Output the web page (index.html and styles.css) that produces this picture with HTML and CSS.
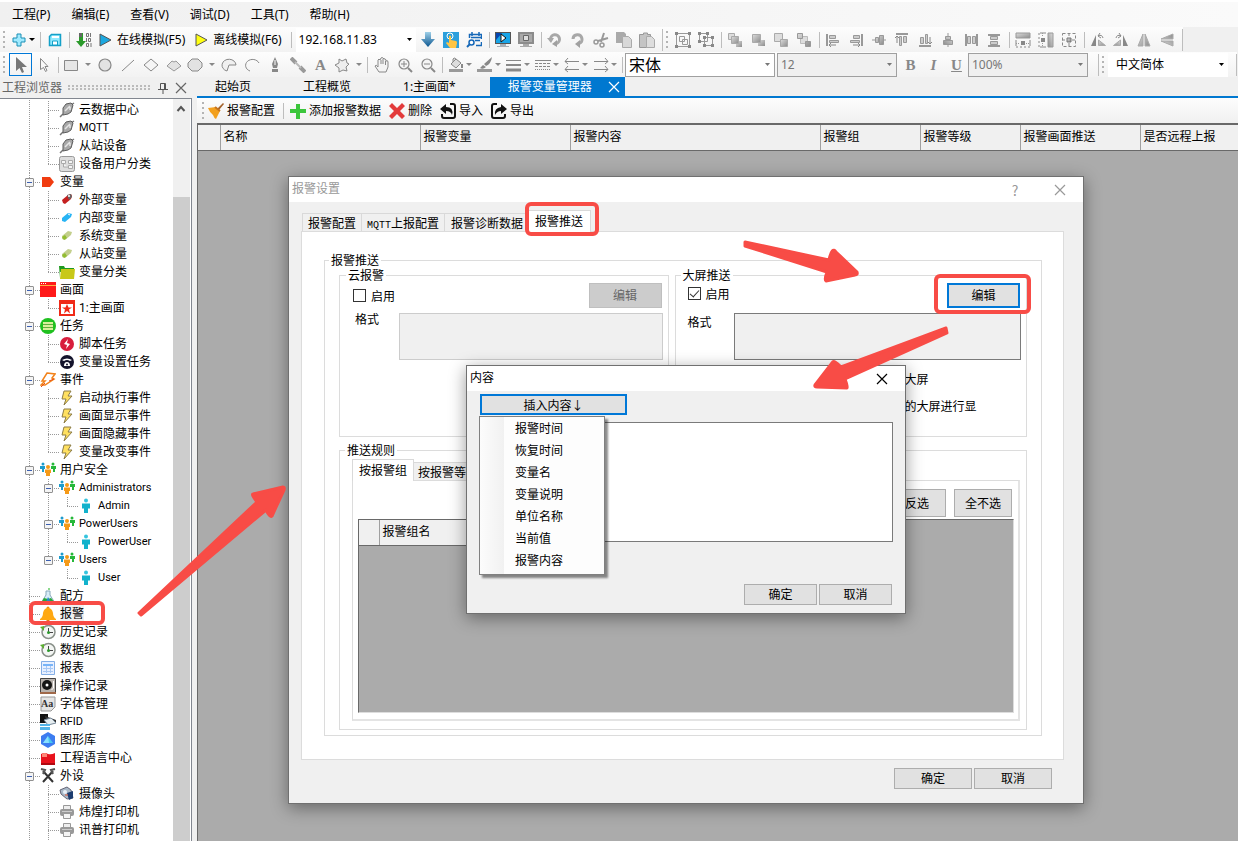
FILE: index.html
```html
<!DOCTYPE html>
<html lang="zh-CN">
<head>
<meta charset="utf-8">
<title>报警变量管理器</title>
<link rel="stylesheet" href="styles.css">
</head>
<body>
<svg class="sprite" aria-hidden="true">
  <defs>
    <linearGradient id="gr" x1="0" y1="0" x2="1" y2="1"><stop offset="0" stop-color="#dcdcdc"/><stop offset="1" stop-color="#8c8c8c"/></linearGradient>
    <linearGradient id="down" x1="0" y1="0" x2="0" y2="1"><stop offset="0" stop-color="#9fd0e8"/><stop offset="1" stop-color="#0a5590"/></linearGradient>
  </defs>
  <symbol id="add" viewBox="0 0 16 16"><path d="M6 2h4v4h4v4h-4v4H6v-4H2V6h4z" fill="#9feaff" stroke="#1a8fb5"/></symbol>
  <symbol id="save" viewBox="0 0 16 16"><path d="M2.500 4.500l2-2h9v11h-11z" fill="#8feaff" stroke="#14a0c8" stroke-width="1.500"/><path d="M5.500 13V9h5v4z" fill="#fff" stroke="#14a0c8"/><path d="M5 4h7v2H5z" fill="#fff"/></symbol>
  <symbol id="load" viewBox="0 0 16 16"><path d="M3 1h4v8h3l-5 6-5-6h3z" fill="#2b9a2b"/><path d="M3 1h3v4H3z" fill="#666"/><path d="M10.500 1.500h2v3h-2zM14.500 1v4M10.500 6v4M12.500 6.500h2v3h-2zM10.500 11.500h2v3h-2zM15 11v4" fill="none" stroke="#777"/></symbol>
  <symbol id="playb" viewBox="0 0 16 16"><path d="M3 2l11 6-11 6z" fill="#1ba8e0" stroke="#555"/></symbol>
  <symbol id="playy" viewBox="0 0 16 16"><path d="M3 2l11 6-11 6z" fill="#ffff10" stroke="#555"/></symbol>
  <symbol id="darr" viewBox="0 0 16 16"><path d="M5 0h6v7h4l-7 8-7-8h4z" fill="url(#down)"/></symbol>
  <symbol id="hand2" viewBox="0 0 16 16"><path d="M0 0h16v16H0z" fill="#2b9fdc"/><circle cx="7" cy="4" r="3" fill="none" stroke="#fff"/><path d="M6 4q1-1 2 0v4l5 1q1 0 1 2l-1 5H7l-4-5 1-1 2 1z" fill="#ffc544"/></symbol>
  <symbol id="find" viewBox="0 0 16 16"><path d="M3.500 6V2.500h12V7M15.500 10v3.500H10M5 5.500h10M6 0v4M13 0v4M9 8.500h5" fill="none" stroke="#1668b8" stroke-width="1.500"/><circle cx="5.500" cy="10.500" r="2.500" fill="#fff" stroke="#1668b8" stroke-width="1.500"/><path d="M4 12l-3 3" stroke="#1668b8" stroke-width="2"/></symbol>
  <symbol id="monp" viewBox="0 0 16 16"><path d="M0 0h16v12H0z" fill="#555"/><path d="M1 1h14v10H1z" fill="#18a5e8"/><path d="M1 8V1h6z" fill="#0846b0"/><path d="M6 2l5 4-5 4z" fill="#fff" stroke="#111"/><path d="M5 12h6v2h3v1H2v-1h3z" fill="#a8b0b8"/></symbol>
  <symbol id="mons" viewBox="0 0 16 16"><path d="M0 0h16v12H0z" fill="#8c8c8c"/><path d="M2 2h12v8H2z" fill="#a9a9a9"/><path d="M5.500 3.500h5v5h-5z" fill="#ddd" stroke="#666"/><path d="M5 12h6v2h3v1H2v-1h3z" fill="#aaa"/></symbol>
  <symbol id="undo" viewBox="0 0 16 16"><path d="M3.500 7.500a4.500 4.500 0 1 1 6 4" fill="none" stroke="#a8a8a8" stroke-width="3"/><path d="M10 8v7l-5-3z" fill="#a0a0a0"/><path d="M0 6h7l-3 5z" fill="#a8a8a8"/></symbol>
  <symbol id="redo" viewBox="0 0 16 16"><path d="M3 7a4.500 4.500 0 1 1 6 4.500" fill="none" stroke="#a8a8a8" stroke-width="3"/><path d="M10 8l-5 4 5 4z" fill="#a0a0a0"/></symbol>
  <symbol id="cut" viewBox="0 0 16 16"><path d="M11 1L8 10M15 6L5 9" stroke="#999" stroke-width="2"/><circle cx="3" cy="10" r="2" fill="none" stroke="#999" stroke-width="1.500"/><circle cx="9" cy="13" r="2" fill="none" stroke="#999" stroke-width="1.500"/></symbol>
  <symbol id="copy" viewBox="0 0 16 16"><path d="M0 0h8l2 2v9H0z" fill="#aaa"/><path d="M6.500 4.500h6l3 3v8h-9z" fill="#d8d8d8" stroke="#aaa"/></symbol>
  <symbol id="paste" viewBox="0 0 16 16"><path d="M0.500 2.500h4V1h4v1.500h3v13h-11z" fill="#c4c4c4" stroke="#999"/><path d="M7.500 4.500h5l3 3v8h-8z" fill="#ddd" stroke="#aaa"/></symbol>
  <symbol id="group" viewBox="0 0 16 16"><path d="M1.500 1.500h13v13h-13zM4.500 4.500h5v5h-5zM7.500 7.500h5v5h-5z" fill="none" stroke="#999"/><path d="M0 0h3v3H0zM13 0h3v3h-3zM0 13h3v3H0zM13 13h3v3h-3z" fill="#888"/></symbol>
  <symbol id="ungroup" viewBox="0 0 16 16"><path d="M1.500 1.500h8v8h-8zM6.500 5.500h8v8h-8z" fill="none" stroke="#999"/><path d="M0 0h3v3H0zM8 0h3v3H8zM0 8h3v3H0zM5 4h3v3H5zM13 4h3v3h-3zM5 12h3v3H5zM13 12h3v3h-3z" fill="#888"/></symbol>
  <symbol id="lay1" viewBox="0 0 16 16"><path d="M1.500 1.500h6v6h-6z" fill="#ddd" stroke="#aaa"/><path d="M9 9h6v6H9z" fill="url(#gr)"/><path d="M4.500 4.500h7v7h-7z" fill="url(#gr)" stroke="#aaa"/></symbol>
  <symbol id="lay2" viewBox="0 0 16 16"><path d="M8 8h7v6H8z" fill="url(#gr)"/><path d="M2.500 2.500h8v8h-8z" fill="url(#gr)" stroke="#aaa"/></symbol>
  <symbol id="lay3" viewBox="0 0 16 16"><path d="M1.500 1.500h8v8h-8z" fill="#ddd" stroke="#aaa"/><path d="M7.500 7.500h7v7h-7z" fill="url(#gr)" stroke="#aaa"/></symbol>
  <symbol id="lay4" viewBox="0 0 16 16"><path d="M4.500 4.500h7v7h-7z" fill="#ddd" stroke="#bbb"/><path d="M1.500 1.500h5v5h-5zM9.500 9.500h5v5h-5z" fill="url(#gr)" stroke="#999"/></symbol>
  <symbol id="al" viewBox="0 0 16 16"><path d="M1 2h2v12H1z" fill="#999"/><path d="M4.500 3.500h6v3h-6zM4.500 8.500h9v2h-9z" fill="#ccc" stroke="#999"/><path d="M4 13h7M6 11l-2 2 2 2" fill="none" stroke="#888"/></symbol>
  <symbol id="ac" viewBox="0 0 16 16"><path d="M1 8h14" stroke="#999"/><path d="M4.500 5.500h3v5h-3zM8.500 3.500h4v9h-4z" fill="url(#gr)" stroke="#999"/></symbol>
  <symbol id="dist" viewBox="0 0 16 16"><path d="M3 2v12M14 2v12" stroke="#999" stroke-width="2"/><path d="M4.500 4.500h3v7h-3zM9.500 4.500h3v7h-3z" fill="#ccc" stroke="#999"/></symbol>
  <symbol id="samew" viewBox="0 0 16 16"><path d="M1 1h14v5H1z" fill="url(#gr)" stroke="#999"/><path d="M6 9h4v4H6z" fill="#888"/><path d="M1 8v6M15 8v6" stroke="#888"/><path d="M1 11.500h4M11 11.500h4" stroke="#999" stroke-dasharray="1 1"/><path d="M1 15h14" stroke="#888" stroke-dasharray="2 2"/></symbol>
  <symbol id="sameb" viewBox="0 0 16 16"><path d="M1.500 1.500h13v13h-13zM8 1v4M8 11v4M1 8h4M11 8h4" fill="none" stroke="#888" stroke-dasharray="3 2"/><path d="M6 6h4v4H6z" fill="url(#gr)" stroke="#777"/></symbol>
  <symbol id="flip" viewBox="0 0 16 16"><path d="M7 2v12H2zM9 2v12h5z" fill="url(#gr)" stroke="#aaa"/></symbol>
  <symbol id="rot" viewBox="0 0 16 16"><path d="M6 3v11H1z" fill="#888"/><path d="M8.500 8v5.500h7z" fill="url(#gr)" stroke="#aaa"/><path d="M8 4q4-2 5 2M10 1L8 4l3 2" fill="none" stroke="#888"/></symbol>
  <symbol id="ptr" viewBox="0 0 16 16"><path d="M3 0v14l3.500-3 2.500 5 2-1-2-5h5z" fill="#777"/></symbol>
  <symbol id="ptro" viewBox="0 0 16 16"><path d="M4.500 1.500v11l3-2 2 4 1.500-1-2-4h3z" fill="#fafafa" stroke="#888"/></symbol>
  <symbol id="rect" viewBox="0 0 16 16"><path d="M1.500 3.500h13v10h-13z" fill="#e6e6e6" stroke="#888"/></symbol>
  <symbol id="circ" viewBox="0 0 16 16"><circle cx="8" cy="8" r="6" fill="#e2e2e2" stroke="#888" stroke-width="1.200"/></symbol>
  <symbol id="line" viewBox="0 0 16 16"><path d="M2 14L14 3" stroke="#888"/></symbol>
  <symbol id="dia" viewBox="0 0 16 16"><path d="M1 8l7-6 7 6-7 6z" fill="#f5f5f5" stroke="#888"/></symbol>
  <symbol id="dia2" viewBox="0 0 16 16"><path d="M1 9l5-5 2 1 2-1 5 5-7 5z" fill="#e2e2e2" stroke="#999"/></symbol>
  <symbol id="oct" viewBox="0 0 16 16"><path d="M5 2h6l4 4v4l-4 4H5l-4-4V6z" fill="#e2e2e2" stroke="#888"/></symbol>
  <symbol id="pie" viewBox="0 0 16 16"><path d="M8 8h7a7 6 0 1 0-9 6z" fill="#f0f0f0" stroke="#888"/></symbol>
  <symbol id="arc" viewBox="0 0 16 16"><path d="M15 6A7 6 0 1 0 6 14" fill="none" stroke="#888"/></symbol>
  <symbol id="pen" viewBox="0 0 16 16"><path d="M8 0l3 7-1 4H6L5 7zM5 12h6v3H5z" fill="#888"/><path d="M8 3v5" stroke="#fff"/></symbol>
  <symbol id="pipe" viewBox="0 0 16 16"><path d="M1 1l5 5M10 10l5 5" stroke="#999" stroke-width="4"/><path d="M5 5l6 6" stroke="#bbb" stroke-width="2"/></symbol>
  <symbol id="star" viewBox="0 0 16 16"><path d="M5 2l3 2 4-2 1 4 2 1-3 3 1 4-4-1-4 2v-4L1 8l4-2z" fill="#eee" stroke="#888"/></symbol>
  <symbol id="palm" viewBox="0 0 16 16"><path d="M5 15l-4-6q1-2 3 1V3q1-2 2 0l1-2q1-1 2 0l1 1q1-1 2 1v1q2-1 2 1v5l-2 5zM7 3v4M9 2v5M11.500 4v4" fill="#f4f4f4" stroke="#888"/></symbol>
  <symbol id="zin" viewBox="0 0 16 16"><circle cx="7" cy="7" r="5" fill="#f4f4f4" stroke="#888" stroke-width="1.200"/><path d="M11 11l4 4" stroke="#888" stroke-width="2"/><path d="M4 7h6M7 4v6" stroke="#888"/></symbol>
  <symbol id="zout" viewBox="0 0 16 16"><circle cx="7" cy="7" r="5" fill="#f4f4f4" stroke="#888" stroke-width="1.200"/><path d="M11 11l4 4" stroke="#888" stroke-width="2"/><path d="M4 7h6" stroke="#888"/></symbol>
  <symbol id="bucket" viewBox="0 0 16 16"><path d="M3 7l5-5 5 4-5 5zM5 5V2q1-2 3 0" fill="#ddd" stroke="#888"/><path d="M14 7v4" stroke="#888" stroke-width="2"/><path d="M1 12h14v3H1z" fill="#999"/></symbol>
  <symbol id="brush" viewBox="0 0 16 16"><path d="M15 0q-1 7-6 9L7 7zM6 8l3 2q-3 3-6 1z" fill="#888"/><path d="M0 12h15v3H0z" fill="#999"/></symbol>
  <symbol id="lines" viewBox="0 0 16 16"><path d="M0 3.500h15" stroke="#888"/><path d="M0 8h15" stroke="#888" stroke-width="2"/><path d="M0 13h15" stroke="#888" stroke-width="3"/></symbol>
  <symbol id="dash" viewBox="0 0 16 16"><path d="M0 3.500h16" stroke="#888"/><path d="M0 6.500h16M0 9.500h16" stroke="#888" stroke-dasharray="3 1"/><path d="M0 12.500h16" stroke="#888" stroke-dasharray="1 1"/></symbol>
  <symbol id="arrl" viewBox="0 0 16 16"><path d="M1 4.500h14M4 1L1 4.500 4 7M1 12.500h14M4 9l-3 3.500L4 15" fill="none" stroke="#888"/></symbol>
  <symbol id="arrr" viewBox="0 0 16 16"><path d="M1 4.500h14M12 1l3 3.500L12 7M1 12.500h14M12 9l3 3.500L12 15" fill="none" stroke="#888"/></symbol>

  <symbol id="broom" viewBox="0 0 16 16"><path d="M15 0l1 1-5 6-2-1z" fill="#a3622b"/><path d="M0 5l8-1 4 4-4 8q-2-1-3-4-3-2-5-7z" fill="#f2a01e"/><path d="M7 4l5 4" stroke="#c8741c" stroke-width="2"/></symbol>
  <symbol id="plus" viewBox="0 0 16 16"><path d="M6 1h4v5h6v4h-6v6H6v-6H0V6h6z" fill="#3cc63c"/></symbol>
  <symbol id="del" viewBox="0 0 16 16"><path d="M3 0l5 5 5-5 3 3-5 5 5 5-3 3-5-5-5 5-3-3 5-5-5-5z" fill="#e33b3b"/></symbol>
  <symbol id="imp" viewBox="0 0 16 16"><path d="M10 1h3q2 0 2 2v10q0 2-2 2H4q-2 0-2-2v-2" fill="none" stroke="#111" stroke-width="2"/><path d="M0 6l6-5v3q8 0 6 8-1-4-6-4v3z" fill="#111"/></symbol>
  <symbol id="exp" viewBox="0 0 16 16"><path d="M6 1H3Q1 1 1 3v10q0 2 2 2h9q2 0 2-2v-2" fill="none" stroke="#111" stroke-width="2"/><path d="M16 6l-6-5v3Q3 5 4 12q2-4 6-4v3z" fill="#111"/></symbol>

  <symbol id="plug" viewBox="0 0 16 16"><path d="M1 15l3-3M12 3l3-2" stroke="#777" stroke-width="1.500"/><path d="M4 6l3-4 5-1 2 2-2 7-3 2-5 1z" fill="#a8a8a8" stroke="#5c5c5c"/><path d="M6 9l5-5M11 5v3" stroke="#e4e4e4" stroke-width="1.500"/></symbol>
  <symbol id="cls" viewBox="0 0 16 16"><rect x=".5" y=".5" width="15" height="15" rx="2" fill="#ddd" stroke="#999"/><path d="M2.500 4.500h4v3h-4zM9.500 4.500h4v3h-4zM9.500 9.500h4v3h-4zM4.500 8v3h5" fill="#f5f5f5" stroke="#aaa"/></symbol>
  <symbol id="tagr" viewBox="0 0 16 16"><path d="M2 3h8l4 5-4 5H2z" fill="#f03c10"/></symbol>
  <symbol id="v1" viewBox="0 0 16 16"><path d="M3 8l6-5 3-1 1 2-1 3-6 5-2-1z" fill="#c42020"/><path d="M8 3l4-1 1 3-3 3z" fill="#666"/><circle cx="10" cy="4" r="1" fill="#fff"/></symbol>
  <symbol id="v2" viewBox="0 0 16 16"><path d="M3 8l6-5 4 1-1 3-6 5-3-1z" fill="#28b4f4"/><path d="M9 4l2 1" stroke="#fff"/></symbol>
  <symbol id="v3" viewBox="0 0 16 16"><path d="M3 8l6-5 4 1-1 3-6 5-3-1z" fill="#c3cf8c"/><path d="M3 9l3-2 2 3-3 2z" fill="#92bd30"/></symbol>
  <symbol id="fold" viewBox="0 0 16 16"><path d="M0 2h5l1 2h9v4H1v6z" fill="#1f9a20"/><path d="M2 5h14l-1 10H1z" fill="#c8c818"/></symbol>
  <symbol id="scr" viewBox="0 0 16 16"><path d="M0 0h16v15H0z" fill="#ff1a1a"/><path d="M0 3.500h16" stroke="#ffb040"/><path d="M1 1.500h5" stroke="#fff" stroke-dasharray="1 1"/></symbol>
  <symbol id="scr2" viewBox="0 0 16 16"><path d="M0 0h16v16H0z" fill="#f02a18"/><path d="M2 4h12v10H2z" fill="#fff"/><path d="M8 4l1.500 3.500H13l-3 2 1 4-3-2.500-3 2.500 1-4-3-2h3.500z" fill="#f02a18"/></symbol>
  <symbol id="task" viewBox="0 0 16 16"><circle cx="8" cy="8" r="8" fill="#1fc01f"/><path d="M3 4h10v8H3z" fill="#d9ef9c"/><path d="M3 6.500h10M3 9.500h10" stroke="#5fb03c"/></symbol>
  <symbol id="script" viewBox="0 0 16 16"><circle cx="8" cy="8" r="7" fill="#d81e3c"/><path d="M9 3L5 8l3 1-1 4 4-5-3-1z" fill="#fff"/></symbol>
  <symbol id="setv" viewBox="0 0 16 16"><circle cx="8" cy="8" r="7" fill="#14142c"/><path d="M3 6q5-3 10 0l-2 1q-3-2-6 0zM5 12q0-4 3-4t3 4z" fill="#fff"/><circle cx="8" cy="10.500" r="1" fill="#14142c"/></symbol>
  <symbol id="evt" viewBox="0 0 16 16"><path d="M7 1l8 1-3 4 2 1-9 6H1l4-4H2z" fill="#fff" stroke="#f2821a" stroke-width="1.500"/><path d="M1 15l4-4M9 9l5-2" stroke="#e8501a"/></symbol>
  <symbol id="bolt" viewBox="0 0 16 16"><path d="M5 1h7L9 6h4L5 15l2-6H3z" fill="#ffe060" stroke="#8c7d48"/></symbol>
  <symbol id="users" viewBox="0 0 16 16"><circle cx="3" cy="2" r="1.500" fill="#1e9ccc"/><path d="M0 4h5v3H4v3H2V7H0z" fill="#1e9ccc"/><circle cx="13" cy="2" r="1.500" fill="#26b83a"/><path d="M11 4h5v3h-1v3h-2V7h-2z" fill="#26b83a"/><circle cx="8" cy="5" r="2" fill="#f59a18"/><path d="M5 7.500h6V11h-1v3H6v-3H5z" fill="#f59a18"/></symbol>
  <symbol id="user" viewBox="0 0 16 16"><circle cx="8" cy="2.500" r="2" fill="#35c4de"/><path d="M4 5.500h8v5h-2V15H6v-4.500H4z" fill="#12b2cc"/></symbol>
  <symbol id="flask" viewBox="0 0 16 16"><path d="M6 3h4v4l5 8H1l5-8z" fill="#d8ecf8" stroke="#8ab"/><path d="M4 10l4 1 3-1 4 5H1z" fill="#28a838"/><path d="M8 9l3 5H6z" fill="#2888c8"/><circle cx="9" cy="1" r="1" fill="#6c6"/></symbol>
  <symbol id="bell" viewBox="0 0 16 16"><circle cx="8" cy="2" r="1.500" fill="#f09010"/><path d="M8 2q4 0 5 5 0 4 3 6v1H0v-1q3-2 3-6 1-5 5-5z" fill="#ffa812"/><path d="M6 14h4l-2 2z" fill="#e87810"/></symbol>
  <symbol id="hist" viewBox="0 0 16 16"><circle cx="8.500" cy="8" r="6.500" fill="#f4f6f4" stroke="#8a918a" stroke-width="1.500"/><path d="M0 3l4-1v5z" fill="#5cb030"/><path d="M8.500 4v4.500H13" fill="none" stroke="#444"/><circle cx="8.500" cy="8.500" r="1.500" fill="#2c9a2c"/></symbol>
  <symbol id="rep" viewBox="0 0 16 16"><path d="M1.500 1.500h13v13h-13z" fill="#e8f0ff" stroke="#84aee6"/><path d="M3 4h10v2H3z" fill="#78b4f8"/><path d="M3 8.500h10M3 11.500h10M6.500 6v7M10.500 6v7" stroke="#a8c8f4"/></symbol>
  <symbol id="oper" viewBox="0 0 16 16"><path d="M.5.500h15v14H.5z" fill="#b9b3ae" stroke="#444"/><path d="M0 14h16v2H0z" fill="#a0694a"/><circle cx="7" cy="7" r="5" fill="#151515"/><circle cx="7" cy="7" r="1.500" fill="#fff"/><path d="M13.500 3v7l-2 2" fill="none" stroke="#fff"/></symbol>
  <symbol id="rfid" viewBox="0 0 16 16"><path d="M0 0h8v9H0z" fill="#111"/><path d="M5 2l11 4v3L6 6z" fill="#333"/><path d="M4 6l7-2 5 5-8 2z" fill="#e6edf0" stroke="#789"/><path d="M0 10h10v6H0z" fill="#54b4e8"/><path d="M0 12.500h10" stroke="#fff"/></symbol>
  <symbol id="shape" viewBox="0 0 16 16"><path d="M8 0l7 4v8l-7 4-7-4V4z" fill="#3c7cf0"/><path d="M8 4l5 7H3z" fill="#48c8f0"/><path d="M8 4l1 7H3z" fill="#88e0ff"/></symbol>
  <symbol id="lang" viewBox="0 0 16 16"><path d="M1 4q4-2 7 0 3 1 7-1v12H1z" fill="#e8121c"/><path d="M2 4q3-2 5 0v3H2z" fill="#ff8878"/><path d="M1 14h14" stroke="#b00810" stroke-width="2"/></symbol>
  <symbol id="tool" viewBox="0 0 16 16"><path d="M3 14L13 3M3 3l10 11" stroke="#333" stroke-width="2"/><path d="M1 1l4 1-2 4M15 1l-4 1 2 4" fill="none" stroke="#555" stroke-width="2"/></symbol>
  <symbol id="cam" viewBox="0 0 16 16"><path d="M1 4l7-3 4 3 2 8-6 1-6-5z" fill="#a8b8c8" stroke="#667"/><path d="M8 7l6-2v7l-4 2z" fill="#1c3c70"/><circle cx="6" cy="6" r="2" fill="#e8f0f8"/><path d="M6 9h3" stroke="#e05030"/></symbol>
  <symbol id="prn" viewBox="0 0 16 16"><path d="M4.500 1.500h7v4h-7z" fill="#eee" stroke="#999"/><rect x="1" y="5" width="14" height="7" rx="2" fill="#999"/><path d="M4.500 9.500h7v5h-7z" fill="#f4f4f4" stroke="#999"/><path d="M3 7.500h10" stroke="#ccc"/></symbol>
  <symbol id="x" viewBox="0 0 16 16"><path d="M3 3l10 10M13 3L3 13" stroke="currentColor" stroke-width="1.200"/></symbol>
  <symbol id="pin" viewBox="0 0 16 16"><path d="M5.500 3.500h5v6h-5zM9.500 3v6M3 9.500h10M8 10v4" fill="none" stroke="#555"/></symbol>
</svg>

<nav class="menubar">
  <a href="#">工程(P)</a><a href="#">编辑(E)</a><a href="#">查看(V)</a><a href="#">调试(D)</a><a href="#">工具(T)</a><a href="#">帮助(H)</a>
</nav>

<div class="strip">
  <i class="grip"></i>
  <button class="tb drop add"><svg><use href="#add"/></svg></button>
  <i class="sep"></i>
  <button class="tb"><svg><use href="#save"/></svg></button>
  <i class="sep"></i>
  <button class="tb"><svg><use href="#load"/></svg></button>
  <button class="tb text"><svg><use href="#playb"/></svg>在线模拟(F5)</button>
  <button class="tb text"><svg><use href="#playy"/></svg>离线模拟(F6)</button>
  <i class="sep"></i>
  <select class="combo ip" aria-label="设备地址"><option>192.168.11.83</option></select>
  <button class="tb"><svg><use href="#darr"/></svg></button>
  <button class="tb"><svg><use href="#hand2"/></svg></button>
  <button class="tb"><svg><use href="#find"/></svg></button>
  <i class="sep"></i>
  <button class="tb"><svg><use href="#monp"/></svg></button>
  <button class="tb"><svg><use href="#mons"/></svg></button>
  <i class="sep"></i>
  <button class="tb"><svg><use href="#undo"/></svg></button>
  <button class="tb"><svg><use href="#redo"/></svg></button>
  <button class="tb"><svg><use href="#cut"/></svg></button>
  <button class="tb"><svg><use href="#copy"/></svg></button>
  <button class="tb"><svg><use href="#paste"/></svg></button>
  <i class="sep end"></i>
  <i class="grip"></i>
  <button class="tb"><svg><use href="#group"/></svg></button>
  <button class="tb"><svg><use href="#ungroup"/></svg></button>
  <i class="sep"></i>
  <button class="tb"><svg><use href="#lay1"/></svg></button>
  <button class="tb"><svg><use href="#lay2"/></svg></button>
  <button class="tb"><svg><use href="#lay3"/></svg></button>
  <button class="tb"><svg><use href="#lay4"/></svg></button>
  <i class="sep"></i>
  <button class="tb"><svg><use href="#al"/></svg></button>
  <button class="tb"><svg class="mirror"><use href="#al"/></svg></button>
  <button class="tb"><svg><use href="#ac"/></svg></button>
  <button class="tb"><svg class="quarter"><use href="#al"/></svg></button>
  <button class="tb"><svg class="back"><use href="#al"/></svg></button>
  <button class="tb"><svg class="quarter"><use href="#ac"/></svg></button>
  <button class="tb"><svg><use href="#dist"/></svg></button>
  <button class="tb"><svg class="quarter"><use href="#dist"/></svg></button>
  <i class="sep"></i>
  <button class="tb"><svg><use href="#samew"/></svg></button>
  <button class="tb"><svg class="quarter"><use href="#samew"/></svg></button>
  <button class="tb"><svg><use href="#sameb"/></svg></button>
  <i class="sep"></i>
  <button class="tb"><svg><use href="#rot"/></svg></button>
  <button class="tb"><svg class="mirror"><use href="#rot"/></svg></button>
  <button class="tb"><svg><use href="#flip"/></svg></button>
  <button class="tb"><svg class="back"><use href="#flip"/></svg></button>
  <i class="sep end"></i>
</div>

<div class="strip">
  <i class="grip"></i>
  <button class="tb on"><svg><use href="#ptr"/></svg></button>
  <button class="tb"><svg><use href="#ptro"/></svg></button>
  <i class="sep"></i>
  <button class="tb drop"><svg><use href="#rect"/></svg></button>
  <button class="tb"><svg><use href="#circ"/></svg></button>
  <button class="tb"><svg><use href="#line"/></svg></button>
  <button class="tb"><svg><use href="#dia"/></svg></button>
  <button class="tb"><svg><use href="#dia2"/></svg></button>
  <button class="tb drop"><svg><use href="#oct"/></svg></button>
  <button class="tb"><svg><use href="#pie"/></svg></button>
  <button class="tb"><svg><use href="#arc"/></svg></button>
  <button class="tb"><svg><use href="#pen"/></svg></button>
  <button class="tb"><svg><use href="#pipe"/></svg></button>
  <button class="tb letter">A</button>
  <button class="tb drop"><svg><use href="#star"/></svg></button>
  <i class="sep"></i>
  <button class="tb"><svg><use href="#palm"/></svg></button>
  <button class="tb"><svg><use href="#zin"/></svg></button>
  <button class="tb"><svg><use href="#zout"/></svg></button>
  <i class="sep"></i>
  <button class="tb drop slim"><svg><use href="#bucket"/></svg></button>
  <button class="tb drop slim"><svg><use href="#brush"/></svg></button>
  <button class="tb drop slim"><svg><use href="#lines"/></svg></button>
  <button class="tb drop slim"><svg><use href="#dash"/></svg></button>
  <button class="tb drop slim"><svg><use href="#arrl"/></svg></button>
  <button class="tb drop slim"><svg><use href="#arrr"/></svg></button>
  <i class="sep"></i>
  <select class="combo framed family" aria-label="字体"><option>宋体</option></select>
  <select class="combo framed" aria-label="字号"><option>12</option></select>
  <button class="tb letter">B</button>
  <button class="tb letter"><i>I</i></button>
  <button class="tb letter"><u>U</u></button>
  <select class="combo framed" aria-label="缩放"><option>100%</option></select>
  <i class="sep end late"></i>
  <i class="grip"></i>
  <select class="combo language" aria-label="语言"><option>中文简体</option></select>
  <i class="sep end late"></i>
</div>

<div class="work">
  <aside class="side">
    <div class="side-head"><span>工程浏览器</span><i class="dots"></i><svg><use href="#pin"/></svg><svg><use href="#x"/></svg></div>
    <div class="side-box">
      <ul class="tree">
        <li><ul>
          <li><a href="#"><svg><use href="#plug"/></svg>云数据中心</a></li>
          <li><a class="en" href="#"><svg><use href="#plug"/></svg>MQTT</a></li>
          <li><a href="#"><svg><use href="#plug"/></svg>从站设备</a></li>
          <li><a href="#"><svg><use href="#cls"/></svg>设备用户分类</a></li>
        </ul></li>
        <li><a class="open" href="#"><svg><use href="#tagr"/></svg>变量</a><ul>
          <li><a href="#"><svg><use href="#v1"/></svg>外部变量</a></li>
          <li><a href="#"><svg><use href="#v2"/></svg>内部变量</a></li>
          <li><a href="#"><svg><use href="#v3"/></svg>系统变量</a></li>
          <li><a href="#"><svg><use href="#v3"/></svg>从站变量</a></li>
          <li><a href="#"><svg><use href="#fold"/></svg>变量分类</a></li>
        </ul></li>
        <li><a class="open" href="#"><svg><use href="#scr"/></svg>画面</a><ul>
          <li><a href="#"><svg><use href="#scr2"/></svg>1:主画面</a></li>
        </ul></li>
        <li><a class="open" href="#"><svg><use href="#task"/></svg>任务</a><ul>
          <li><a href="#"><svg><use href="#script"/></svg>脚本任务</a></li>
          <li><a href="#"><svg><use href="#setv"/></svg>变量设置任务</a></li>
        </ul></li>
        <li><a class="open" href="#"><svg><use href="#evt"/></svg>事件</a><ul>
          <li><a href="#"><svg><use href="#bolt"/></svg>启动执行事件</a></li>
          <li><a href="#"><svg><use href="#bolt"/></svg>画面显示事件</a></li>
          <li><a href="#"><svg><use href="#bolt"/></svg>画面隐藏事件</a></li>
          <li><a href="#"><svg><use href="#bolt"/></svg>变量改变事件</a></li>
        </ul></li>
        <li><a class="open" href="#"><svg><use href="#users"/></svg>用户安全</a><ul>
          <li><a class="open en" href="#"><svg><use href="#users"/></svg>Administrators</a><ul><li><a class="en" href="#"><svg><use href="#user"/></svg>Admin</a></li></ul></li>
          <li><a class="open en" href="#"><svg><use href="#users"/></svg>PowerUsers</a><ul><li><a class="en" href="#"><svg><use href="#user"/></svg>PowerUser</a></li></ul></li>
          <li><a class="open en" href="#"><svg><use href="#users"/></svg>Users</a><ul><li><a class="en" href="#"><svg><use href="#user"/></svg>User</a></li></ul></li>
        </ul></li>
        <li><a href="#"><svg><use href="#flask"/></svg>配方</a></li>
        <li><a class="current" href="#"><svg><use href="#bell"/></svg><span>报警</span></a></li>
        <li><a href="#"><svg><use href="#hist"/></svg>历史记录</a></li>
        <li><a href="#"><svg><use href="#hist"/></svg>数据组</a></li>
        <li><a href="#"><svg><use href="#rep"/></svg>报表</a></li>
        <li><a href="#"><svg><use href="#oper"/></svg>操作记录</a></li>
        <li><a href="#"><svg viewBox="0 0 16 16"><path d="M1 1h14v10l-4 4H1z" fill="#e4e4e4" stroke="#999"/><text class="glyph" x="1" y="11">Aa</text></svg>字体管理</a></li>
        <li><a class="en" href="#"><svg><use href="#rfid"/></svg>RFID</a></li>
        <li><a href="#"><svg><use href="#shape"/></svg>图形库</a></li>
        <li><a href="#"><svg><use href="#lang"/></svg>工程语言中心</a></li>
        <li><a class="open" href="#"><svg><use href="#tool"/></svg>外设</a><ul>
          <li><a href="#"><svg><use href="#cam"/></svg>摄像头</a></li>
          <li><a href="#"><svg><use href="#prn"/></svg>炜煌打印机</a></li>
          <li><a href="#"><svg><use href="#prn"/></svg>讯普打印机</a></li>
          <li><a href="#"><svg><use href="#prn"/></svg></a></li>
        </ul></li>
      </ul>
      <div class="scroll"><svg viewBox="0 0 16 16"><path d="M4.500 10L8 6l3.500 4" fill="none" stroke="#555" stroke-width="2"/></svg><i></i></div>
    </div>
  </aside>

  <main class="main">
    <div class="doctabs">
      <a href="#">起始页</a><a href="#">工程概览</a><a href="#">1:主画面*</a><a class="active" href="#">报警变量管理器<svg><use href="#x"/></svg></a>
    </div>
    <div class="actions">
      <i class="grip"></i>
      <button class="act"><svg><use href="#broom"/></svg>报警配置</button>
      <i class="sep wide"></i>
      <button class="act"><svg><use href="#plus"/></svg>添加报警数据</button>
      <button class="act"><svg><use href="#del"/></svg>删除</button>
      <button class="act"><svg><use href="#imp"/></svg>导入</button>
      <button class="act"><svg><use href="#exp"/></svg>导出</button>
    </div>
    <div class="canvas">
      <table class="grid">
        <colgroup><col class="w22"><col class="w200"><col class="w150"><col class="w250"><col class="w100"><col class="w100"><col class="w120"><col></colgroup>
        <thead><tr><th></th><th>名称</th><th>报警变量</th><th>报警内容</th><th>报警组</th><th>报警等级</th><th>报警画面推送</th><th>是否远程上报</th></tr></thead>
      </table>
    </div>
  </main>
</div>

<section class="window settings" role="dialog" aria-label="报警设置">
  <header class="title"><span>报警设置</span><button class="sys">?</button><button class="sys"><svg><use href="#x"/></svg></button></header>
  <div class="settings-body">
    <div class="tabs"><button>报警配置</button><button><span class="mono">MQTT</span>上报配置</button><button class="tight">报警诊断数据</button><button class="sel">报警推送</button></div>
    <div class="page">
      <fieldset class="outer">
        <legend>报警推送</legend>
        <div class="pair">
          <fieldset class="cloud">
            <legend>云报警</legend>
            <div class="line"><label><input type="checkbox">启用</label><button class="btn" disabled>编辑</button></div>
            <div class="line top"><label for="f1">格式</label><textarea id="f1" disabled></textarea></div>
          </fieldset>
          <fieldset class="screen">
            <legend>大屏推送</legend>
            <div class="line"><label class="raised"><input type="checkbox" checked>启用</label><button class="btn focus">编辑</button></div>
            <div class="line top"><label for="f2">格式</label><textarea id="f2" readonly></textarea></div>
            <p>大屏</p>
            <p>的大屏进行显</p>
          </fieldset>
        </div>
        <fieldset class="rules">
          <legend>推送规则</legend>
          <div class="tabs"><button class="sel">按报警组</button><button>按报警等级</button></div>
          <div class="page inner">
            <div class="picks"><button class="btn">反选</button><button class="btn">全不选</button></div>
            <div class="list">
              <table class="grid"><colgroup><col class="w20"><col></colgroup><thead><tr><th></th><th>报警组名</th></tr></thead></table>
            </div>
          </div>
        </fieldset>
      </fieldset>
    </div>
    <footer class="buttons"><button class="btn">确定</button><button class="btn">取消</button></footer>
  </div>
</section>

<section class="window content" role="dialog" aria-label="内容">
  <header class="title"><span>内容</span><button class="sys"><svg><use href="#x"/></svg></button></header>
  <div class="content-body">
    <button class="btn focus insert">插入内容↓</button>
    <textarea class="editor" aria-label="内容"></textarea>
    <footer class="buttons"><button class="btn">确定</button><button class="btn">取消</button></footer>
  </div>
  <div class="popup" role="menu">
    <button>报警时间</button><button>恢复时间</button><button>变量名</button><button>变量说明</button><button>单位名称</button><button>当前值</button><button>报警内容</button>
  </div>
</section>

<svg class="marks" viewBox="0 0 1238 841" aria-hidden="true">
  <g fill="none" stroke="#f84c46" stroke-width="4">
    <rect x="31" y="603" width="72" height="20" rx="4"/>
    <rect x="527" y="204" width="70" height="30" rx="4"/>
    <rect x="936" y="276" width="93" height="36" rx="4"/>
  </g>
  <g fill="#f84c46" stroke="#f84c46" stroke-width="3" stroke-linejoin="round">
    <path d="M745 242l84 18q3-14 7-8l21 20q1 3-2 3l-29 6q-2-1 1-9l-82-26z"/>
    <path d="M946 328l-105 39q-7-8-9-4l-17 22q-1 2 2 2l30 1q1-1-2-9l102-46z"/>
    <path d="M139 613l118-111q-6-8-4-8l30-7q2 0 1 3l-12 26q-2 2-6-6l-125 105z"/>
  </g>
</svg>
</body>
</html>
```

FILE: styles.css
```css
*, *::before, *::after { box-sizing: border-box; }

html { height: 100%; }

body {
  margin: 0;
  height: 100vh;
  display: flex;
  flex-direction: column;
  overflow: hidden;
  position: relative;
  background: #f0f0f0;
  color: #000;
  font: 12px/18px "Noto Sans", "Noto Sans CJK SC", sans-serif;
}

button, select, textarea, input { font: inherit; color: inherit; margin: 0; }
button { border: 0; background: none; padding: 0; }
a { color: inherit; text-decoration: none; }
.sprite { position: absolute; width: 0; height: 0; }
svg { width: 16px; height: 16px; flex: none; }

/* menu */
.menubar {
  display: flex;
  gap: 21px;
  height: 27px;
  padding: 4px 12px 0;
  border-top: 2px solid #fff;
  background: linear-gradient(90deg, #f0f0f0, #fafafa);
}

/* tool strips */
.strip {
  display: flex;
  align-items: center;
  align-self: flex-start;
  height: 25px;
  flex: none;
  white-space: nowrap;
  background: linear-gradient(#fdfdfd, #f2f2f2);
}
.grip {
  width: 9px;
  height: 17px;
  flex: none;
  background: repeating-linear-gradient(#b4b4b4 0 2px, transparent 2px 5px) 3px 0 / 2px 100% no-repeat;
}
.sep {
  width: 6px;
  height: 16px;
  flex: none;
  background: linear-gradient(#bdbdbd, #bdbdbd) 3px 0 / 1px 100% no-repeat;
}
.sep.wide { width: 10px; }
.sep.end { width: 4px; height: 22px; }
.sep.late { width: 9px; background-position: 8px 0; }
.tb {
  display: flex;
  align-items: center;
  justify-content: center;
  width: 23px;
  height: 23px;
  flex: none;
}
.tb.text { width: auto; gap: 4px; padding: 0 6px 0 2px; }
.tb.on { border: 1px solid #0078d7; }
.tb.drop { width: 32px; gap: 6px; }
.tb.slim { width: 29px; gap: 2px; }
.tb.drop::after {
  content: "";
  border: 3px solid transparent;
  border-top-color: #888;
  border-bottom: 0;
}
.tb.add { width: 28px; gap: 2px; }
.tb.add::after { border-top-color: #000; }
.tb.letter { color: #888; font: bold 15px/20px "Liberation Serif", serif; }
.mirror { transform: scaleX(-1); }
.quarter { transform: rotate(90deg); }
.back { transform: rotate(-90deg); }

.combo {
  appearance: none;
  width: 120px;
  height: 24px;
  padding: 0 20px 0 6px;
  border: 0;
  border-radius: 0;
  background: #fff url("data:image/svg+xml,%3Csvg xmlns='http://www.w3.org/2000/svg' width='5' height='3'%3E%3Cpath d='M0 0h5L2.500 3z'/%3E%3C/svg%3E") right 4px center no-repeat;
}
.combo.ip { margin: 0 1px 0 2px; padding-left: 3px; }
.combo.language { padding-left: 8px; }
.combo.framed {
  margin-right: 2px;
  padding-left: 3px;
  border: 1px solid #a0a0a0;
  color: #777;
  background-color: #f0f0f0;
  background-image: url("data:image/svg+xml,%3Csvg xmlns='http://www.w3.org/2000/svg' width='5' height='3'%3E%3Cpath fill='%23777' d='M0 0h5L2.500 3z'/%3E%3C/svg%3E");
}
.combo.family {
  width: 150px;
  color: #000;
  background-color: #fff;
  font-size: 16px;
}

/* work area */
.work { display: flex; flex: 1; min-height: 0; }
.side { display: flex; flex-direction: column; width: 192px; margin-right: 5px; flex: none; }
.side-head {
  display: flex;
  align-items: center;
  gap: 2px;
  height: 21px;
  padding: 0 3px 0 2px;
  color: #666;
}
.dots {
  flex: 1;
  height: 5px;
  margin: 0 3px 0 4px;
  background: radial-gradient(circle at 1px 1px, #bbb 1px, transparent 1px) 0 0 / 4px 3px;
}
.side-box {
  display: flex;
  flex: 1;
  min-height: 0;
  overflow: hidden;
  border: 1px solid #828790;
  border-width: 1px 1px 0 0;
  background: #fff;
}
.tree { flex: 1; padding-top: 1px; }
.tree, .tree ul { margin: 0; padding-left: 0; list-style: none; }
.tree > li:first-child { padding-top: 1px; }
.tree ul { padding-left: 19px; }
.tree li { background: repeating-linear-gradient(#999 0 1px, transparent 1px 2px) 29px 0 / 1px 100% no-repeat; }
.tree ul > li:last-child { background-size: 1px 9px; }
.tree a {
  display: flex;
  align-items: center;
  gap: 4px;
  height: 18px;
  padding-left: 40px;
  white-space: nowrap;
  font-family: Roboto, "Noto Sans CJK SC", sans-serif;
  background: repeating-linear-gradient(90deg, #999 0 1px, transparent 1px 2px) 29px 9px / 11px 1px no-repeat;
}
.tree a.en { font-size: 11px; }
.tree a.open { padding-left: 25px; gap: 0; }
.tree a.open svg { margin: 0 4px 0 6px; }
.tree a.open::before {
  content: "";
  width: 9px;
  height: 9px;
  border: 1px solid #919191;
  border-radius: 1px;
  background: linear-gradient(#3b5fb0, #3b5fb0) 1px 3px / 5px 1px no-repeat, #f4f4f4;
}
.tree .current span { background: #f0f0f0; }
.glyph { font: bold 10px "Liberation Serif", serif; fill: #333; }
.scroll {
  display: flex;
  flex-direction: column;
  width: 17px;
  margin-right: 1px;
  background: #f0f0f0;
}
.scroll svg { margin-top: 2px; }
.scroll i { flex: 1; margin-top: 80px; background: #cdcdcd; }

/* document area */
.main { display: flex; flex-direction: column; flex: 1; min-width: 0; }
.doctabs { display: flex; height: 21px; border-bottom: 2px solid #0078d0; }
.doctabs a { display: flex; align-items: center; padding: 0 34px 0 18px; }
.doctabs .active { gap: 14px; padding-right: 3px; background: #0078d0; color: #fff; }
.actions {
  display: flex;
  align-items: center;
  height: 25px;
  padding-left: 2px;
  background: linear-gradient(#fdfdfd, #f0f0f0);
}
.act { display: flex; align-items: center; gap: 3px; margin-right: 8px; }
.actions .sep { margin-left: -3px; }
.canvas { flex: 1; border: solid #696969; border-width: 2px 0 0 1px; background: #ababab; }

.grid { width: 100%; table-layout: fixed; border-collapse: collapse; }
.grid th {
  height: 25px;
  padding: 0 3px 2px;
  border: 1px solid #a0a0a0;
  border-width: 0 0 1px 1px;
  border-bottom-color: #696969;
  background: #f0f0f0;
  font-weight: normal;
  text-align: left;
  white-space: nowrap;
  font-family: "Noto Sans CJK SC", sans-serif;
}
.grid th:first-child { border-left: 0; }
.w20 { width: 20px; }
.w22 { width: 22px; }
.w100 { width: 100px; }
.w120 { width: 120px; }
.w150 { width: 150px; }
.w200 { width: 200px; }
.w250 { width: 250px; }

/* windows */
.window {
  position: absolute;
  border: 1px solid #707070;
  background: #f0f0f0;
  box-shadow: 0 4px 16px rgba(0, 0, 0, .4);
  font-family: "Noto Sans CJK SC", sans-serif;
}
.settings { left: 288px; top: 176px; width: 796px; }
.content { left: 466px; top: 365px; width: 440px; }
.title { display: flex; align-items: center; height: 25px; padding-left: 3px; background: #fff; }
.title span { flex: 1; padding-bottom: 3px; }
.title .sys { display: flex; align-items: center; justify-content: center; width: 46px; height: 24px; font-size: 14px; }
.title .sys:first-of-type:not(:last-child) { width: 44px; }
.settings .title { color: #999; }

.btn {
  width: 73px;
  height: 21px;
  padding-bottom: 2px;
  border: 1px solid #adadad;
  background: #e1e1e1;
  white-space: nowrap;
  line-height: 17px;
}
.btn.focus { border: 2px solid #0078d7; }
.btn:disabled { border-color: #bfbfbf; background: #ccc; color: #666; }
.buttons { display: flex; justify-content: flex-end; gap: 2px; }

.settings-body { padding: 8px 19px 14px 12px; }
.settings-body > .buttons { margin-top: 8px; padding-right: 12px; }
.settings-body > .buttons .btn { width: 78px; }
.tabs { display: flex; align-items: flex-end; padding-left: 1px; }
.tabs button {
  height: 18px;
  padding: 0 5px;
  border: 1px solid #d9d9d9;
  border-width: 1px 1px 0 0;
  background: #f0f0f0;
  white-space: nowrap;
}
.tabs button:first-child { border-left-width: 1px; }
.tabs .sel {
  height: 22px;
  margin-bottom: -1px;
  padding: 0 7px 2px;
  border-left-width: 1px;
  background: #fff;
}
.tabs .tight { padding: 0 3px 0 6px; }
.mono { font: 10px/18px "Liberation Mono", monospace; }
.page { padding: 22px 21px 23px 22px; border: 1px solid #dcdcdc; background: #fff; }

fieldset { min-width: 0; margin: 0; padding: 0; border: 1px solid #dcdcdc; }
legend { margin-left: -7px; padding: 0 2px; line-height: 12px; }
.outer { padding: 3px 14px 5px; }
.outer > legend { margin-left: -10px; }
.pair { display: flex; gap: 6px; height: 168px; }
.cloud { flex: 1 1 329px; padding: 2px 5px 0 13px; }
.screen { flex: 1 1 352px; padding: 2px 5px 0 12px; }
.line { display: flex; align-items: center; justify-content: space-between; }
.line label { display: flex; align-items: center; gap: 5px; }
.line .raised { margin-bottom: 4px; }
.line .btn { height: 25px; margin-right: 1px; }
.line.top { align-items: flex-start; margin-top: 5px; }
.line.top label { width: 46px; padding-left: 2px; flex: none; line-height: 12px; }
.screen .line.top label { padding: 3px 0 0; }
input[type="checkbox"] {
  display: grid;
  place-items: center;
  appearance: none;
  width: 13px;
  height: 13px;
  border: 1px solid #333;
  background: #fff;
}
input[type="checkbox"]:checked::after {
  content: "";
  width: 9px;
  height: 5px;
  margin-bottom: 3px;
  border: solid #333;
  border-width: 0 0 1px 1px;
  transform: rotate(-48deg);
}
textarea {
  display: block;
  flex: 1;
  min-width: 0;
  height: 47px;
  border: 1px solid #7a7a7a;
  border-radius: 0;
  background: #f0f0f0;
  resize: none;
  outline: 0;
}
textarea:disabled { border-color: #ccc; }
.screen p { margin: 10px 0 0 217px; line-height: 18px; white-space: nowrap; }
.screen p + p { margin-top: 9px; }

.rules { margin-top: 7px; padding: 0 6px 8px 12px; }
.rules .tabs { padding-left: 0; margin-top: 3px; }
.rules .sel { padding: 0 6px 2px; }
.rules .tabs button + button { padding: 0 4px; }
.inner { padding: 8px 4px 6px 5px; border-right: 2px solid #e4e4e4; border-bottom: 2px solid #e4e4e4; }
.picks { display: flex; justify-content: flex-end; gap: 8px; padding-right: 2px; }
.picks .btn { width: 58px; height: 28px; }
.list { height: 194px; margin-top: 2px; border: 1px solid #696969; border-right-color: #ddd; border-bottom-color: #ddd; background: #ababab; }
.list .grid { width: 240px; }

.content-body { padding: 3px 12px 8px 13px; }
.content-body .buttons { padding-right: 1px; }
.insert { display: block; width: 147px; }
.editor { width: 100%; height: 120px; margin: 7px 0 42px; background: #fff; }
.popup {
  position: absolute;
  left: 12px;
  top: 50px;
  width: 126px;
  padding: 1px 1px 2px;
  border: 1px solid #808080;
  background: linear-gradient(90deg, #fcfcfc, #f1f1f1 24px, #fdfdfd 24px);
  box-shadow: 3px 3px 2px rgba(0, 0, 0, .45);
}
.popup button { display: block; width: 100%; height: 22px; padding: 0 0 2px 34px; text-align: left; }

.marks { position: absolute; left: 0; top: 0; width: 1238px; height: 841px; pointer-events: none; }
```
